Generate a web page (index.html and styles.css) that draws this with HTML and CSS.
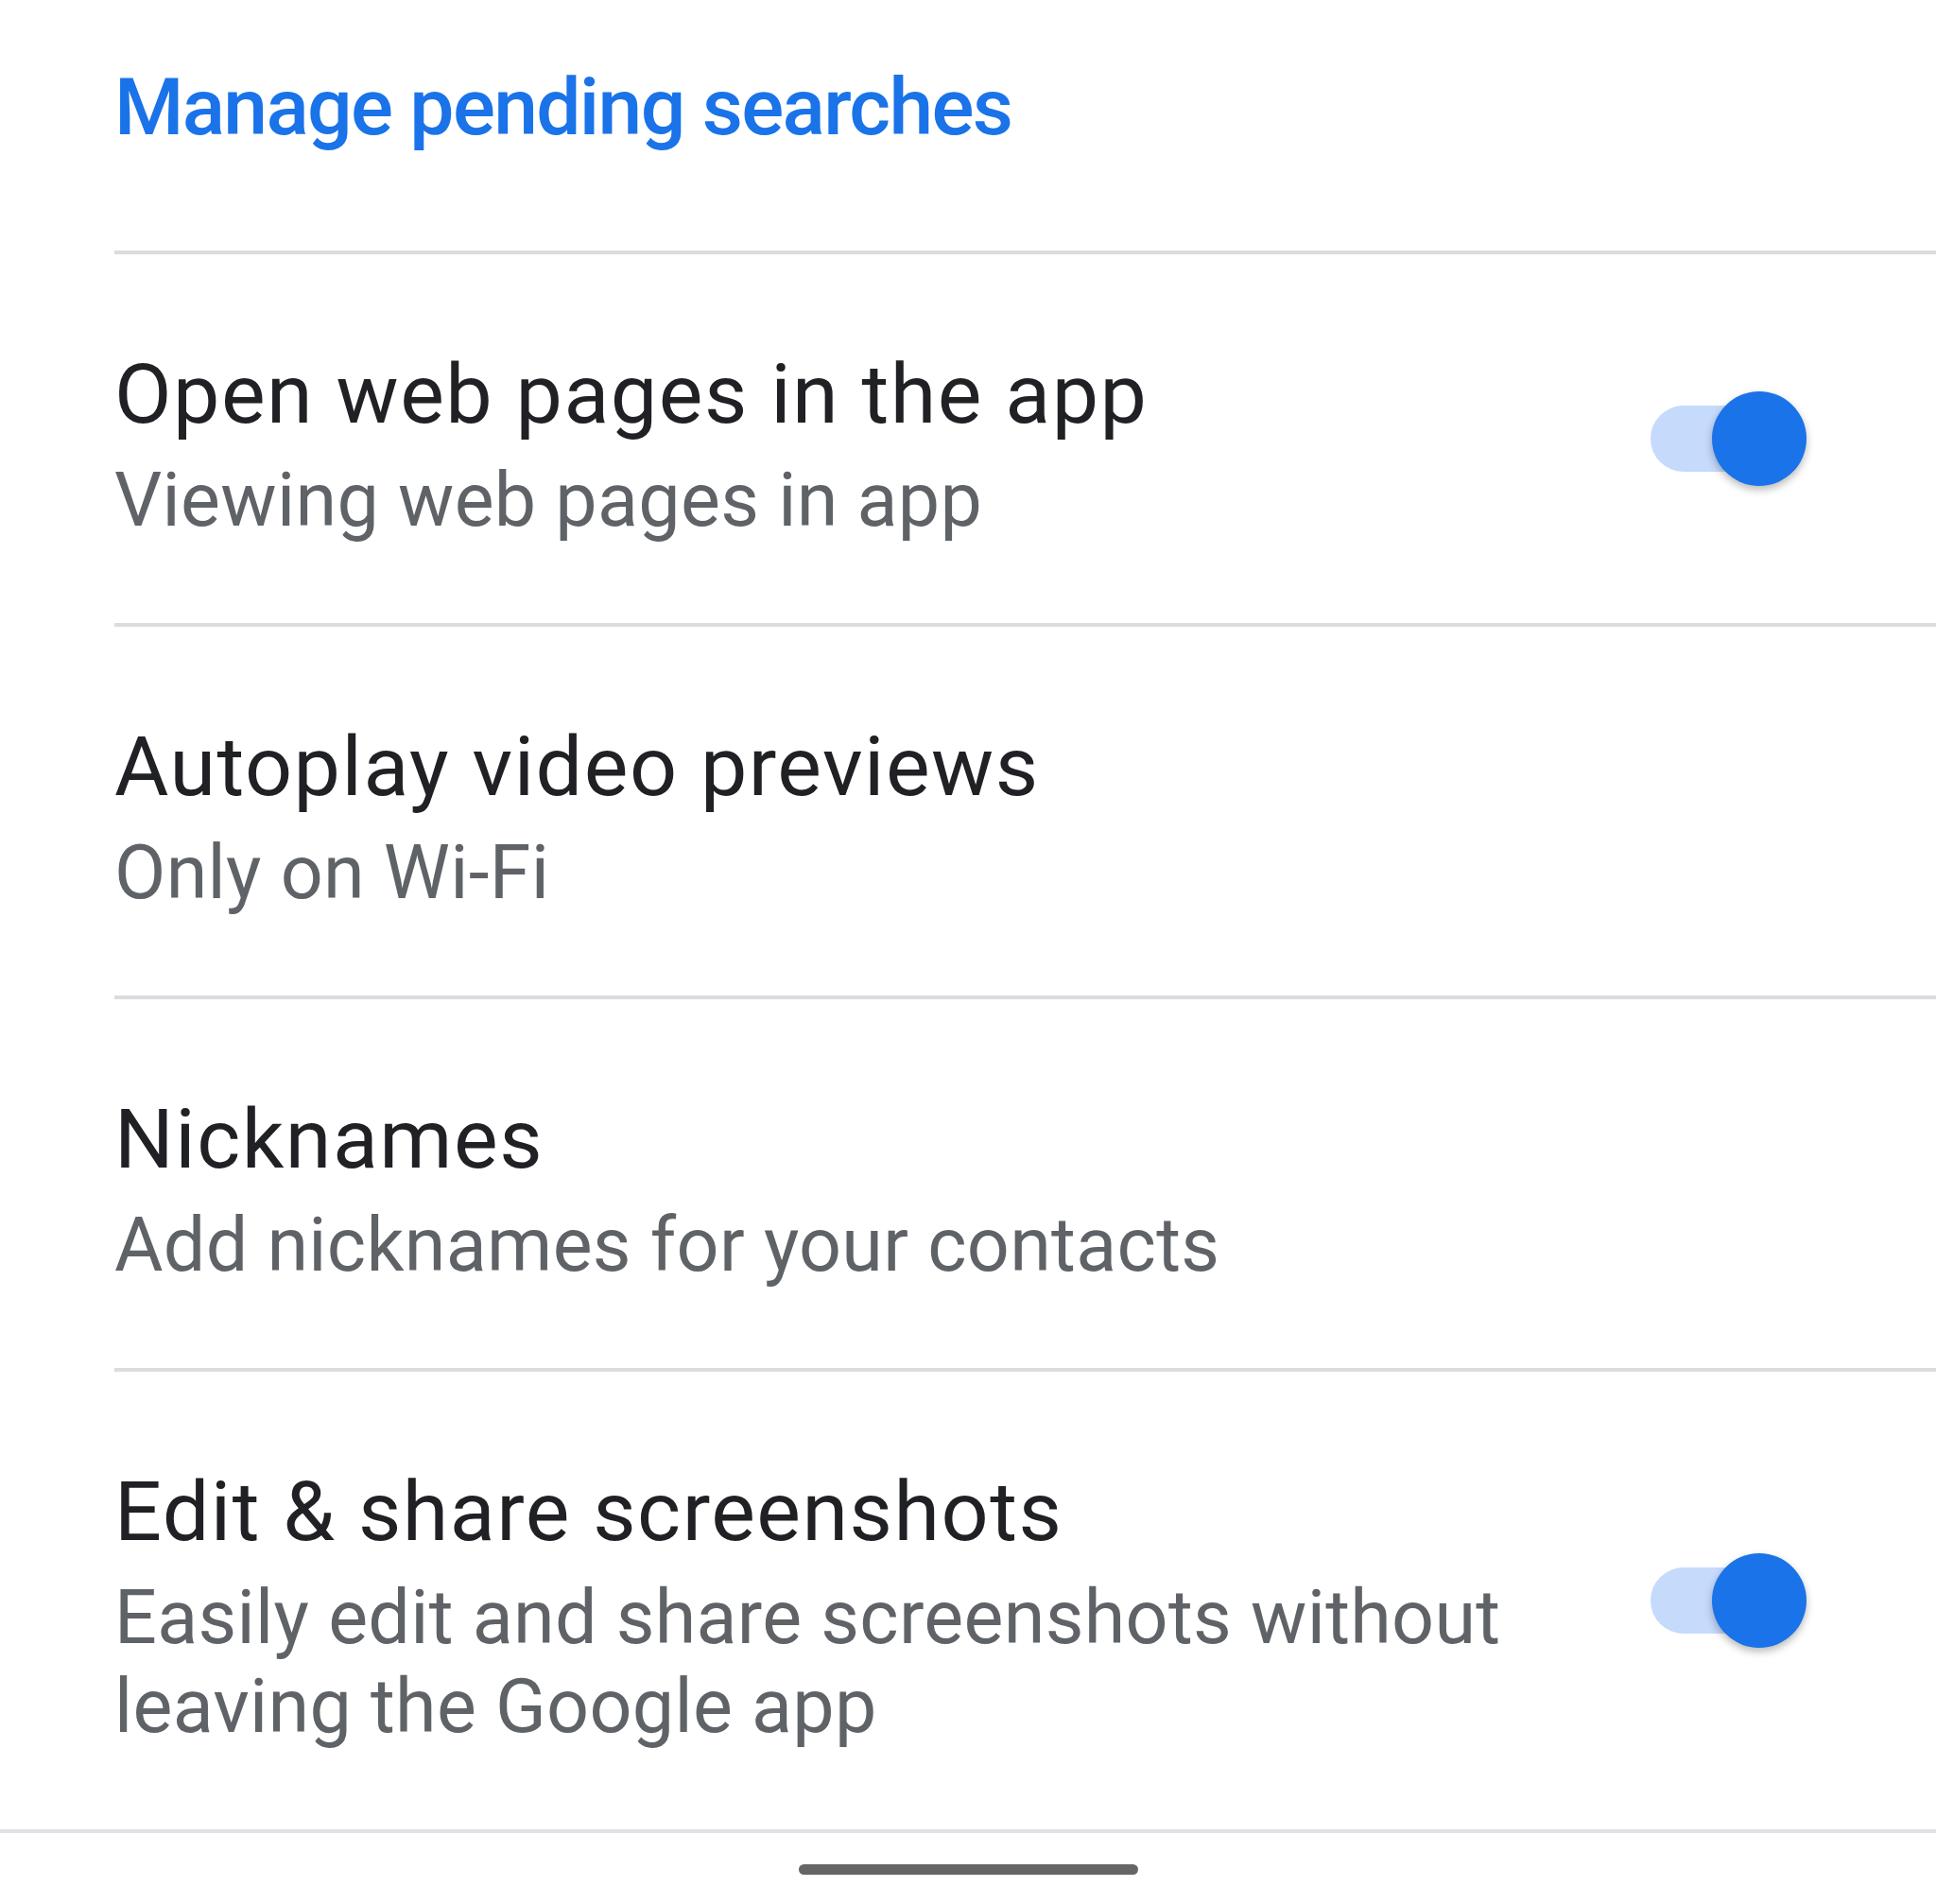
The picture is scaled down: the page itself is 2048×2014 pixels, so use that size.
FILE: index.html
```html
<!DOCTYPE html>
<html>
<head>
<meta charset="utf-8">
<link rel="stylesheet" href="styles.css">
</head>
<body>
<div class="screen">
  <div class="header"><span class="link">Manage pending searches</span></div>
  <div class="list">
    <div class="row">
      <div class="text">
        <div class="title">Open web pages in the app</div>
        <div class="sub">Viewing web pages in app</div>
      </div>
      <div class="switch"><div class="track"></div><div class="thumb"></div></div>
    </div>
    <div class="row">
      <div class="text">
        <div class="title">Autoplay video previews</div>
        <div class="sub">Only on Wi-Fi</div>
      </div>
    </div>
    <div class="row">
      <div class="text">
        <div class="title">Nicknames</div>
        <div class="sub">Add nicknames for your contacts</div>
      </div>
    </div>
    <div class="row">
      <div class="text">
        <div class="title">Edit &amp; share screenshots</div>
        <div class="sub">Easily edit and share screenshots without leaving the Google app</div>
      </div>
      <div class="switch"><div class="track"></div><div class="thumb"></div></div>
    </div>
  </div>
  <div class="bottom-rule"></div>
  <div class="navbar"><div class="handle"></div></div>
</div>
</body>
</html>
```
FILE: styles.css
```css
html, body {
  margin: 0;
  padding: 0;
  background: #ffffff;
}
.screen {
  width: 2048px;
  height: 2014px;
  display: flex;
  flex-direction: column;
  font-family: Roboto, "Liberation Sans", sans-serif;
  overflow: hidden;
}
.header {
  padding: 72px 0 109px 121px;
}
.link {
  display: block;
  font-size: 84px;
  line-height: 84px;
  font-weight: 500;
  color: #1a73e8;
  letter-spacing: -1.7px;
}
.list {
  display: flex;
  flex-direction: column;
}
.row {
  display: flex;
  align-items: center;
  margin-left: 121px;
  border-top: 4px solid #dadce0;
}
.text {
  flex: 1;
  min-width: 0;
  padding: 96px 0 83px 0;
  max-width: 1520px;
}
.title {
  font-size: 88px;
  line-height: 104px;
  color: #202124;
  letter-spacing: 1.5px;
}
.sub {
  margin-top: 13px;
  font-size: 79px;
  line-height: 94px;
  color: #5f6368;
  letter-spacing: 0.3px;
}
.switch {
  position: relative;
  width: 165px;
  height: 100px;
  margin-left: auto;
  margin-right: 137px;
  display: flex;
  align-items: center;
}
.track {
  width: 150px;
  height: 70px;
  border-radius: 35px;
  background: #c6dafc;
}
.thumb {
  position: absolute;
  right: 0;
  top: 0;
  width: 100px;
  height: 100px;
  border-radius: 50%;
  background: #1a73e8;
  box-shadow: 0 4px 9px rgba(0, 0, 0, 0.28);
}
.bottom-rule {
  height: 4px;
  background: #dfe1e5;
}
.navbar {
  display: flex;
  justify-content: center;
  padding-top: 33px;
}
.handle {
  width: 359px;
  height: 11px;
  border-radius: 6px;
  background: #666666;
}
```
